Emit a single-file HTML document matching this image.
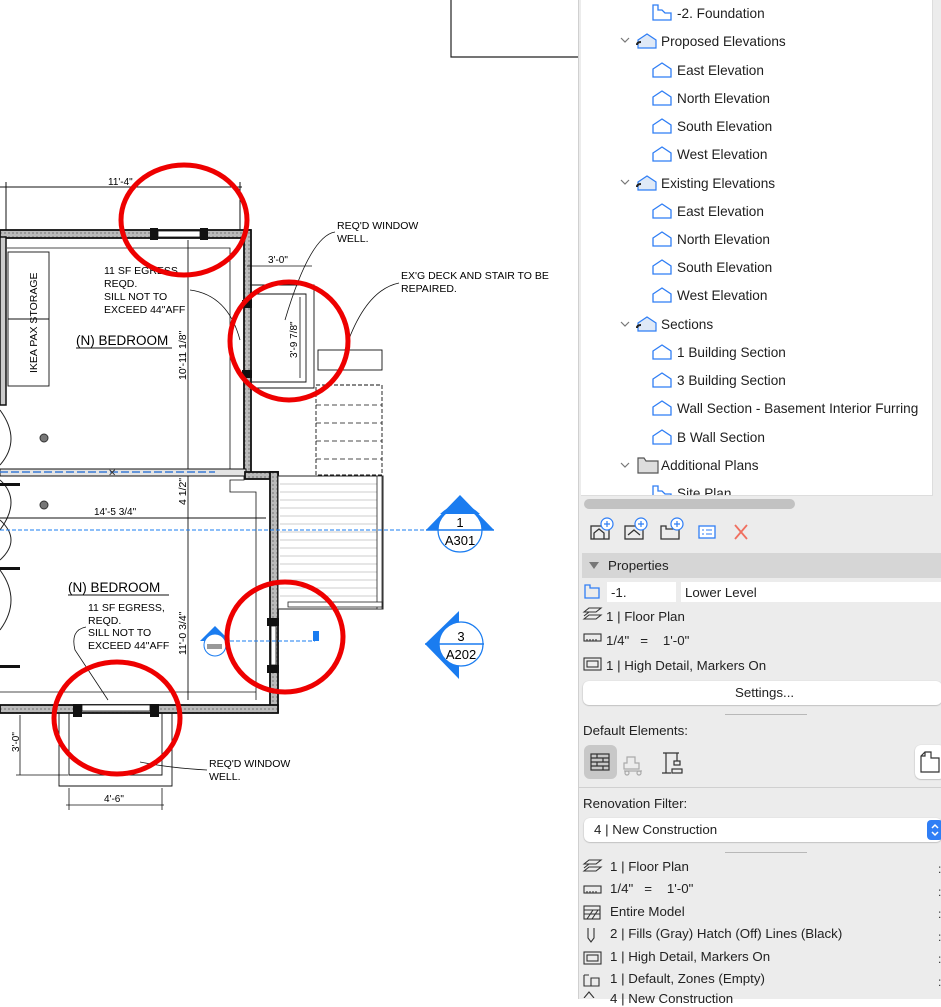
<!DOCTYPE html>
<html><head><meta charset="utf-8">
<style>
*{margin:0;padding:0;box-sizing:border-box}
body{width:941px;height:999px;overflow:hidden;background:#fff;font-family:"Liberation Sans",Arial,sans-serif;position:relative}
#draw{position:absolute;left:0;top:0;width:578px;height:999px}
#panel{position:absolute;left:578px;top:0;width:363px;height:999px;background:#ececec;border-left:1px solid #d0d0d0}
#tree{position:absolute;left:2px;top:0;width:352px;height:496px;background:#fff;border-right:1px solid #ddd;border-bottom:1px solid #ddd;overflow:hidden}
.row{position:absolute;left:0;font-size:13.3px;color:#222;white-space:nowrap;line-height:16px}
</style></head><body>
<svg id="draw" width="578" height="999" viewBox="0 0 578 999" font-family="Liberation Sans, Arial, sans-serif">
<defs>
<pattern id="hat" width="4" height="4" patternUnits="userSpaceOnUse"><rect width="4" height="4" fill="#bbb"/><rect x="0" y="0" width="2" height="2" fill="#999"/></pattern>
</defs>
<path d="M451 0 V57 H578" fill="none" stroke="#222" stroke-width="1.2"/>
<line x1="0" y1="187" x2="242" y2="187" stroke="#111" stroke-width="1"/>
<line x1="6" y1="182" x2="6" y2="232" stroke="#111"/>
<line x1="240" y1="182" x2="240" y2="232" stroke="#111"/>
<text x="108" y="185" font-size="10">11'-4"</text>
<rect x="0" y="230" width="250" height="8" fill="url(#hat)" stroke="#111" stroke-width="1.8"/>
<rect x="244" y="230" width="7" height="245" fill="url(#hat)" stroke="#111" stroke-width="1.8"/>
<rect x="0" y="237" width="6" height="168" fill="#ccc" stroke="#111" stroke-width="1.5"/>
<rect x="150" y="228" width="8" height="12" fill="#111"/>
<rect x="200" y="228" width="8" height="12" fill="#111"/>
<rect x="158" y="231" width="42" height="6" fill="#fff" stroke="#111" stroke-width=".8"/>
<path d="M7 248 H230 V470" fill="none" stroke="#111" stroke-width=".8"/>
<rect x="8" y="252" width="41" height="134" fill="#fff" stroke="#111" stroke-width=".9"/>
<line x1="8" y1="319" x2="49" y2="319" stroke="#111" stroke-width=".9"/>
<text transform="translate(37 373) rotate(-90)" font-size="10.5">IKEA PAX STORAGE</text>
<text x="104" y="274" font-size="10.5">11 SF EGRESS,</text>
<text x="104" y="287" font-size="10.5">REQD.</text>
<text x="104" y="300" font-size="10.5">SILL NOT TO</text>
<text x="104" y="313" font-size="10.5">EXCEED 44"AFF</text>
<text x="76" y="345" font-size="13.5">(N) BEDROOM</text>
<line x1="76" y1="348" x2="172" y2="348" stroke="#111"/>
<path d="M190 290 Q228 295 240 340" fill="none" stroke="#111" stroke-width=".8"/>
<line x1="188" y1="240" x2="188" y2="700" stroke="#111" stroke-width=".9"/>
<text transform="translate(186 380) rotate(-90)" font-size="10.5">10'-11 1/8"</text>
<text transform="translate(186 505) rotate(-90)" font-size="10.5">4 1/2"</text>
<text transform="translate(186 655) rotate(-90)" font-size="10.5">11'-0 3/4"</text>
<circle cx="44" cy="438" r="4" fill="#777" stroke="#333"/>
<circle cx="44" cy="505" r="4" fill="#777" stroke="#333"/>
<path d="M0 410 Q22 440 0 465" fill="none" stroke="#222"/>
<path d="M0 480 Q22 500 0 530" fill="none" stroke="#222"/>
<path d="M0 570 Q22 600 0 630" fill="none" stroke="#222" />
<path d="M0 560 Q22 540 0 520" fill="none" stroke="#222"/>
<rect x="0" y="483" width="20" height="3" fill="#111"/>
<rect x="0" y="567" width="20" height="3" fill="#111"/>
<rect x="0" y="665" width="20" height="3" fill="#111"/>
<rect x="0" y="469" width="246" height="7" fill="#e4e4e4" stroke="#111" stroke-width="1"/>
<line x1="0" y1="472" x2="215" y2="472" stroke="#3a7bd5" stroke-width="1.5" stroke-dasharray="8 3"/>
<text x="108" y="476" font-size="10" fill="#333">✕</text>
<path d="M244 476 V480 H230 V492 H256 V700" fill="none" stroke="#111" stroke-width=".8"/>
<rect x="245" y="472" width="33" height="7" fill="url(#hat)" stroke="#111" stroke-width="1.8"/>
<rect x="270" y="472" width="8" height="240" fill="url(#hat)" stroke="#111" stroke-width="1.8"/>
<rect x="242" y="300" width="10" height="8" fill="#111"/>
<rect x="242" y="370" width="10" height="8" fill="#111"/>
<path d="M250 285 H314 V388 H250" fill="none" stroke="#111" stroke-width=".9"/>
<path d="M252 294 H306 V382 H252" fill="none" stroke="#111" stroke-width=".9"/>
<line x1="247" y1="266" x2="312" y2="266" stroke="#111" stroke-width=".8"/>
<text x="268" y="263" font-size="10">3'-0"</text>
<line x1="300" y1="297" x2="300" y2="378" stroke="#111" stroke-width=".8"/>
<text transform="translate(297 358) rotate(-90)" font-size="10">3'-9 7/8"</text>
<text x="337" y="229" font-size="10.5">REQ'D WINDOW</text>
<text x="337" y="242" font-size="10.5">WELL.</text>
<path d="M335 232 Q310 236 285 320" fill="none" stroke="#111" stroke-width=".8"/>
<text x="401" y="279" font-size="10.5">EX'G DECK AND STAIR TO BE</text>
<text x="401" y="292" font-size="10.5">REPAIRED.</text>
<path d="M399 283 Q365 290 345 350" fill="none" stroke="#111" stroke-width=".8"/>
<rect x="318" y="350" width="64" height="20" fill="#fff" stroke="#111" stroke-width=".9"/>
<rect x="316" y="385" width="66" height="90" fill="none" stroke="#111" stroke-dasharray="4 2" stroke-width=".9"/>
<g stroke="#111" stroke-dasharray="5 3" stroke-width=".8"><line x1="316" y1="405" x2="382" y2="405"/><line x1="316" y1="423" x2="382" y2="423"/><line x1="316" y1="441" x2="382" y2="441"/><line x1="316" y1="459" x2="382" y2="459"/></g>
<rect x="278" y="476" width="105" height="133" fill="#fff" stroke="#222" stroke-width="1"/>
<g stroke="#bbb" stroke-width=".8">
<line x1="280" y1="484" x2="377" y2="484"/><line x1="280" y1="492" x2="377" y2="492"/><line x1="280" y1="500" x2="377" y2="500"/><line x1="280" y1="508" x2="377" y2="508"/><line x1="280" y1="516" x2="377" y2="516"/><line x1="280" y1="524" x2="377" y2="524"/><line x1="280" y1="532" x2="377" y2="532"/><line x1="280" y1="540" x2="377" y2="540"/><line x1="280" y1="548" x2="377" y2="548"/><line x1="280" y1="556" x2="377" y2="556"/><line x1="280" y1="564" x2="377" y2="564"/><line x1="280" y1="572" x2="377" y2="572"/><line x1="280" y1="580" x2="377" y2="580"/><line x1="280" y1="588" x2="377" y2="588"/><line x1="280" y1="596" x2="377" y2="596"/></g>
<rect x="377" y="476" width="5" height="133" fill="#fff" stroke="#222" stroke-width=".8"/>
<rect x="288" y="602" width="94" height="5" fill="#fff" stroke="#222" stroke-width=".8"/>
<line x1="0" y1="518" x2="266" y2="518" stroke="#111" stroke-width=".9"/>
<text x="94" y="515" font-size="10">14'-5 3/4"</text>
<line x1="0" y1="530" x2="425" y2="530" stroke="#1a7cf0" stroke-width="1" stroke-dasharray="4 2"/>
<text x="68" y="592" font-size="13.5">(N)  BEDROOM</text>
<line x1="68" y1="595" x2="169" y2="595" stroke="#111"/>
<text x="88" y="611" font-size="10.5">11 SF EGRESS,</text>
<text x="88" y="624" font-size="10.5">REQD.</text>
<text x="88" y="636" font-size="10.5">SILL NOT TO</text>
<text x="88" y="649" font-size="10.5">EXCEED 44"AFF</text>
<path d="M86 627 Q70 630 75 650 L108 700" fill="none" stroke="#111" stroke-width=".8"/>
<path d="M0 692 H256" stroke="#111" stroke-width=".8"/>
<rect x="0" y="705" width="278" height="8" fill="url(#hat)" stroke="#111" stroke-width="1.8"/>
<rect x="73" y="704" width="9" height="13" fill="#111"/>
<rect x="150" y="704" width="9" height="13" fill="#111"/>
<rect x="82" y="705" width="68" height="6" fill="#fff" stroke="#111" stroke-width=".8"/>
<rect x="267" y="618" width="12" height="8" fill="#111"/>
<rect x="267" y="665" width="12" height="8" fill="#111"/>
<rect x="271" y="626" width="5" height="39" fill="#fff" stroke="#111" stroke-width=".8"/>
<path d="M59 713 V786 H172 V713" fill="none" stroke="#111" stroke-width=".9"/>
<path d="M69 713 V775 H162 V713" fill="none" stroke="#111" stroke-width=".9"/>
<line x1="20" y1="715" x2="20" y2="775" stroke="#111" stroke-width=".8"/>
<line x1="16" y1="775" x2="68" y2="775" stroke="#111" stroke-width=".8"/>
<text transform="translate(19 752) rotate(-90)" font-size="10">3'-0"</text>
<line x1="66" y1="805" x2="164" y2="805" stroke="#111" stroke-width=".8"/>
<line x1="69" y1="788" x2="69" y2="810" stroke="#111" stroke-width=".8"/>
<line x1="162" y1="788" x2="162" y2="810" stroke="#111" stroke-width=".8"/>
<text x="104" y="802" font-size="10">4'-6"</text>
<text x="209" y="767" font-size="10.5">REQ'D WINDOW</text>
<text x="209" y="780" font-size="10.5">WELL.</text>
<path d="M207 770 Q170 768 140 762" fill="none" stroke="#111" stroke-width=".8"/>
<path d="M200 641 L215 626 L230 641 Z" fill="#1a7cf0"/>
<circle cx="215" cy="645" r="11" fill="#fff" stroke="#1a7cf0" stroke-width="1"/>
<rect x="207" y="644" width="15" height="5" fill="#999"/>
<line x1="230" y1="641" x2="315" y2="641" stroke="#1a7cf0" stroke-dasharray="4 2"/>
<rect x="313" y="631" width="6" height="10" fill="#1a7cf0"/>
<path d="M426 530 L460 495 L494 530 Z" fill="#1a7cf0"/>
<circle cx="460" cy="530" r="22" fill="#fff" stroke="#1a7cf0" stroke-width="1.2"/>
<path d="M440 514 Q460 495 480 514" fill="#1a7cf0"/>
<line x1="426" y1="530" x2="494" y2="530" stroke="#1a7cf0" stroke-width="1.5"/>
<text x="460" y="527" font-size="13" text-anchor="middle">1</text>
<text x="460" y="545" font-size="13" text-anchor="middle">A301</text>
<path d="M425 644 L459 611 L459 679 Z" fill="#1a7cf0"/>
<circle cx="461" cy="644" r="22" fill="#fff" stroke="#1a7cf0" stroke-width="1.2"/>
<line x1="425" y1="644" x2="484" y2="644" stroke="#1a7cf0" stroke-width="1.5"/>
<text x="461" y="641" font-size="13" text-anchor="middle">3</text>
<text x="461" y="659" font-size="13" text-anchor="middle">A202</text>
<g fill="none" stroke="#e00" stroke-width="5">
<ellipse cx="184" cy="220" rx="63" ry="55"/>
<ellipse cx="289" cy="341" rx="59" ry="59"/>
<ellipse cx="117" cy="718" rx="63" ry="56"/>
<ellipse cx="285" cy="637" rx="58" ry="55"/>
</g>
</svg>

<div id="panel">
<div id="tree">
<svg width="352" height="496" style="position:absolute;left:0;top:0" font-family="Liberation Sans, Arial, sans-serif" font-size="13.6">
<defs>
<g id="el"><path d="M1 7 L10 1 L19 7 V15 H1 Z" fill="#fff" stroke="#2f7ef5" stroke-width="1.3"/></g>
<g id="fold"><path d="M1 7 L10 1 L19 7 V15 H1 Z" fill="#dfe9f7" stroke="#2f7ef5" stroke-width="1.2"/><path d="M0 12 Q0 9 4 9" fill="none" stroke="#222" stroke-width="2"/></g>
<g id="chev"><path d="M0 0 L4 4 L8 0" fill="none" stroke="#777" stroke-width="1.2"/></g>
<g id="plan"><path d="M1 1 H6 V6 H10 L13 9 H19 V16 H1 Z" fill="#fff" stroke="#2f7ef5" stroke-width="1.3"/></g>
</defs>
<use href="#plan" x="71" y="4"/><text x="96" y="18" fill="#1e1e1e">-2. Foundation</text>
<use href="#chev" x="40" y="38"/><use href="#fold" x="56" y="33"/><text x="80" y="46" fill="#1e1e1e">Proposed Elevations</text>
<use href="#el" x="71" y="62"/><text x="96" y="75" fill="#1e1e1e">East Elevation</text>
<use href="#el" x="71" y="90"/><text x="96" y="103" fill="#1e1e1e">North Elevation</text>
<use href="#el" x="71" y="118"/><text x="96" y="131" fill="#1e1e1e">South Elevation</text>
<use href="#el" x="71" y="146"/><text x="96" y="159" fill="#1e1e1e">West Elevation</text>
<use href="#chev" x="40" y="180"/><use href="#fold" x="56" y="175"/><text x="80" y="188" fill="#1e1e1e">Existing Elevations</text>
<use href="#el" x="71" y="203"/><text x="96" y="216" fill="#1e1e1e">East Elevation</text>
<use href="#el" x="71" y="231"/><text x="96" y="244" fill="#1e1e1e">North Elevation</text>
<use href="#el" x="71" y="259"/><text x="96" y="272" fill="#1e1e1e">South Elevation</text>
<use href="#el" x="71" y="287"/><text x="96" y="300" fill="#1e1e1e">West Elevation</text>
<use href="#chev" x="40" y="322"/><use href="#fold" x="56" y="316"/><text x="80" y="329" fill="#1e1e1e">Sections</text>
<use href="#el" x="71" y="344"/><text x="96" y="357" fill="#1e1e1e">1 Building Section</text>
<use href="#el" x="71" y="372"/><text x="96" y="385" fill="#1e1e1e">3 Building Section</text>
<use href="#el" x="71" y="400"/><text x="96" y="413" fill="#1e1e1e">Wall Section - Basement Interior Furring</text>
<use href="#el" x="71" y="429"/><text x="96" y="442" fill="#1e1e1e">B Wall Section</text>
<use href="#chev" x="40" y="463"/><path d="M57 458 H63 L65 461 H77 V473 H57 Z" fill="#ddd" stroke="#555" stroke-width="1.2"/><text x="80" y="470" fill="#1e1e1e">Additional Plans</text>
<use href="#plan" x="71" y="485"/><text x="96" y="498" fill="#1e1e1e">Site Plan</text>
</svg>
</div>
<div style="position:absolute;left:5px;top:499px;width:211px;height:10px;border-radius:5px;background:#c2c2c2"></div>
<svg width="363" height="40" style="position:absolute;left:0;top:515px">
<g fill="none" stroke="#333" stroke-width="1.3">
<rect x="12" y="11" width="18" height="13"/><path d="M15 24 V18 L20 14 L25 18 V24"/>
<rect x="46" y="11" width="18" height="13"/><path d="M49 20 L55 15 L61 20"/>
<path d="M82 11 H87 V14 H100 V24 H82 Z"/>
</g>
<g fill="#fff" stroke="#2f7ef5" stroke-width="1.2"><circle cx="28" cy="9" r="6"/><circle cx="62" cy="9" r="6"/><circle cx="98" cy="9" r="6"/></g>
<g stroke="#2f7ef5" stroke-width="1.2"><path d="M25 9h6M28 6v6M59 9h6M62 6v6M95 9h6M98 6v6"/></g>
<rect x="120" y="11" width="16" height="12" fill="#fff" stroke="#2f7ef5" stroke-width="1.3"/>
<path d="M123 15h2M127 15h6M123 19h2M127 19h6" stroke="#2f7ef5"/>
<path d="M156 10 L168 24 M168 10 L156 24" stroke="#f07060" stroke-width="1.8"/>
</svg>
<div style="position:absolute;left:3px;top:553px;width:360px;height:25px;background:#d6d6d6"></div>
<div style="position:absolute;left:10px;top:562px;width:0;height:0;border-left:5px solid transparent;border-right:5px solid transparent;border-top:7px solid #777"></div>
<div class="row" style="left:29px;top:558px">Properties</div>
<svg width="20" height="16" style="position:absolute;left:5px;top:584px"><path d="M1 1 H6 V4 H15 V14 H1 Z" fill="none" stroke="#2f7ef5" stroke-width="1.3"/></svg>
<div style="position:absolute;left:28px;top:582px;width:69px;height:20px;background:#fff"></div>
<div class="row" style="left:32px;top:585px">-1.</div>
<div style="position:absolute;left:102px;top:582px;width:261px;height:20px;background:#fff"></div>
<div class="row" style="left:106px;top:585px">Lower Level</div>
<svg width="363" height="80" style="position:absolute;left:0;top:606px" fill="none" stroke="#333" stroke-width="1.1">
<path d="M5 6 L10 2 H22 L17 6 Z M5 10 L10 6 M5 13 L10 9 H22 L17 13 H5 Z"/>
<rect x="5" y="28" width="17" height="7"/><path d="M8 33v2M11 33v2M14 33v2M17 33v2"/>
<rect x="5" y="52" width="17" height="12"/><rect x="8" y="55" width="11" height="6"/>
</svg>
<div class="row" style="left:27px;top:609px">1 | Floor Plan</div>
<div class="row" style="left:27px;top:633px">1/4"&nbsp;&nbsp;&nbsp;=&nbsp;&nbsp;&nbsp;&nbsp;1'-0"</div>
<div class="row" style="left:27px;top:658px">1 | High Detail, Markers On</div>
<div style="position:absolute;left:4px;top:681px;width:359px;height:24px;background:#fff;border-radius:6px;box-shadow:0 0.5px 1.5px rgba(0,0,0,.3)"></div>
<div class="row" style="left:156px;top:685px">Settings...</div>
<div style="position:absolute;left:146px;top:714px;width:82px;height:1px;background:#b8b8b8"></div>
<div class="row" style="left:4px;top:723px">Default Elements:</div>
<div style="position:absolute;left:5px;top:745px;width:33px;height:34px;background:#c8c8c8;border-radius:6px"></div>
<svg width="120" height="40" style="position:absolute;left:0;top:745px" fill="none" stroke="#333" stroke-width="1.2">
<rect x="12" y="9" width="18" height="16"/><path d="M12 13h18M12 17h18M12 21h18M18 9v4M24 13v4M18 17v4M24 21v4"/>
<path d="M48 12h8v6h4v6H45v-6h3z M45 26h18" stroke="#aaa"/><circle cx="48" cy="28" r="2" stroke="#aaa"/><circle cx="60" cy="28" r="2" stroke="#aaa"/>
<path d="M84 8 H100 M87 8 V28 M83 28 H92 M98 8 V16" /><rect x="95" y="16" width="6" height="4"/><rect x="93" y="24" width="10" height="4"/>
</svg>
<div style="position:absolute;left:336px;top:745px;width:30px;height:34px;background:#fff;border-radius:6px;box-shadow:0 0.5px 1.5px rgba(0,0,0,.3)"></div>
<svg width="27" height="30" style="position:absolute;left:338px;top:748px" fill="none" stroke="#333" stroke-width="1.2"><path d="M4 8 L8 4 H14 V10 H22 V24 H4 Z M8 4 V8 H4"/></svg>
<div style="position:absolute;left:0;top:787px;width:363px;height:1px;background:#d0d0d0"></div>
<div class="row" style="left:4px;top:796px">Renovation Filter:</div>
<div style="position:absolute;left:5px;top:818px;width:358px;height:24px;background:#fff;border-radius:6px;box-shadow:0 0.5px 1.5px rgba(0,0,0,.3)"></div>
<div class="row" style="left:15px;top:822px">4 | New Construction</div>
<div style="position:absolute;left:348px;top:820px;width:16px;height:20px;background:#2f7ef5;border-radius:4px"></div>
<svg width="16" height="20" style="position:absolute;left:348px;top:820px"><path d="M5 8 L8 5 L11 8 M5 12 L8 15 L11 12" fill="none" stroke="#fff" stroke-width="1.5"/></svg>
<div style="position:absolute;left:146px;top:852px;width:82px;height:1px;background:#b8b8b8"></div>
<svg width="30" height="140" style="position:absolute;left:0;top:858px" fill="none" stroke="#333" stroke-width="1.1">
<path d="M5 6 L10 2 H22 L17 6 Z M5 10 L10 6 M5 13 L10 9 H22 L17 13 H5 Z"/>
<rect x="5" y="28" width="17" height="7"/><path d="M8 33v2M11 33v2M14 33v2M17 33v2"/>
<rect x="5" y="48" width="16" height="13"/><path d="M5 52h16M5 56h16M8 61l6-9M13 61l6-9"/>
<path d="M9 70 V80 L12 84 L15 80 V70"/>
<rect x="5" y="94" width="17" height="12"/><rect x="8" y="97" width="11" height="6"/>
<path d="M5 117 H10 M5 117 V128 H12 M12 120 h8 v8 h-8z"/>
<path d="M5 140 L10 134 L15 140"/>
</svg>
<div class="row" style="left:31px;top:859px">1 | Floor Plan</div>
<div class="row" style="left:31px;top:881px">1/4"&nbsp;&nbsp;&nbsp;=&nbsp;&nbsp;&nbsp;&nbsp;1'-0"</div>
<div class="row" style="left:31px;top:904px">Entire Model</div>
<div class="row" style="left:31px;top:926px">2 | Fills (Gray) Hatch (Off) Lines (Black)</div>
<div class="row" style="left:31px;top:949px">1 | High Detail, Markers On</div>
<div class="row" style="left:31px;top:971px">1 | Default, Zones (Empty)</div>
<div class="row" style="left:31px;top:991px">4 | New Construction</div>
<div style="position:absolute;left:359px;top:858px;font-size:12px;line-height:22.5px;color:#333">:<br>:<br>:<br>:<br>:<br>:</div>
</div>
</body></html>
